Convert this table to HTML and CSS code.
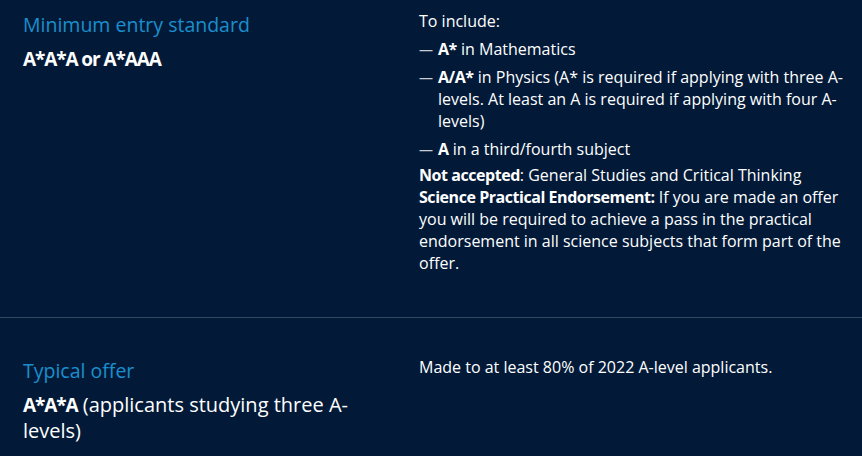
FILE: index.html
```html
<!DOCTYPE html>
<html lang="en">
<head>
<meta charset="utf-8">
<title>Entry requirements</title>
<link rel="stylesheet" href="styles.css">
</head>
<body>
<section class="requirements">
  <div class="req-row">
    <div class="req-summary">
      <h3 class="req-label">Minimum entry standard</h3>
      <p class="req-grade"><strong>A*A*A or A*AAA</strong></p>
    </div>
    <div class="req-detail">
      <p>To include:</p>
      <ul class="dash-list">
        <li><strong>A*</strong> in Mathematics</li>
        <li><strong>A/A*</strong> in Physics (A* is required if applying with three A-levels. At least an A is required if applying with four A-levels)</li>
        <li><strong>A</strong> in a third/fourth subject</li>
      </ul>
      <p class="tight"><strong>Not accepted</strong>: General Studies and Critical Thinking<br><strong>Science Practical Endorsement:</strong> If you are made an offer you will be required to achieve a pass in the practical endorsement in all science subjects that form part of the offer.</p>
    </div>
  </div>
  <div class="req-row">
    <div class="req-summary">
      <h3 class="req-label">Typical offer</h3>
      <p class="req-grade"><strong>A*A*A</strong> (applicants studying three A-levels)</p>
    </div>
    <div class="req-detail">
      <p>Made to at least 80% of 2022 A-level applicants.</p>
    </div>
  </div>
</section>
</body>
</html>
```

FILE: styles.css
```css
html, body {
  margin: 0;
  padding: 0;
  background: #021a38;
}

body {
  font-family: "Open Sans", "Noto Sans", sans-serif;
  color: #ffffff;
  width: 862px;
  height: 456px;
  overflow: hidden;
}

.requirements {
  display: flex;
  flex-direction: column;
}

.req-row {
  display: grid;
  grid-template-columns: 396px 431px;
  padding: 38px 0 43px 23px;
  border-top: 1px solid rgba(255, 255, 255, 0.2);
}

.req-row:first-child {
  padding-top: 10px;
  border-top: none;
}

.req-summary {
  padding-right: 30px;
}

.req-label {
  margin: 0;
  font-size: 19.5px;
  line-height: 30px;
  font-weight: 400;
  color: #1b8fcd;
}

.req-grade {
  margin: 6px 0 0;
  font-size: 20px;
  line-height: 25px;
}

.req-grade strong {
  font-weight: 700;
  font-size: 19px;
  letter-spacing: -1.1px;
}

.req-detail {
  font-size: 16px;
  line-height: 22px;
}

.req-detail strong {
  font-weight: 700;
  letter-spacing: -0.45px;
}

.req-detail p {
  margin: 0;
}

.dash-list {
  list-style: none;
  margin: 6px 0 0;
  padding: 0;
}

.dash-list li {
  padding-left: 19px;
  margin-bottom: 6px;
}

.dash-list li:last-child {
  margin-bottom: 0;
}

.dash-list li::before {
  content: "\2014";
  display: inline-block;
  width: 19px;
  margin-left: -19px;
  font-size: 14px;
  line-height: 1;
  color: #c9ced6;
}

.req-detail .tight {
  margin-top: 4px;
}
```
